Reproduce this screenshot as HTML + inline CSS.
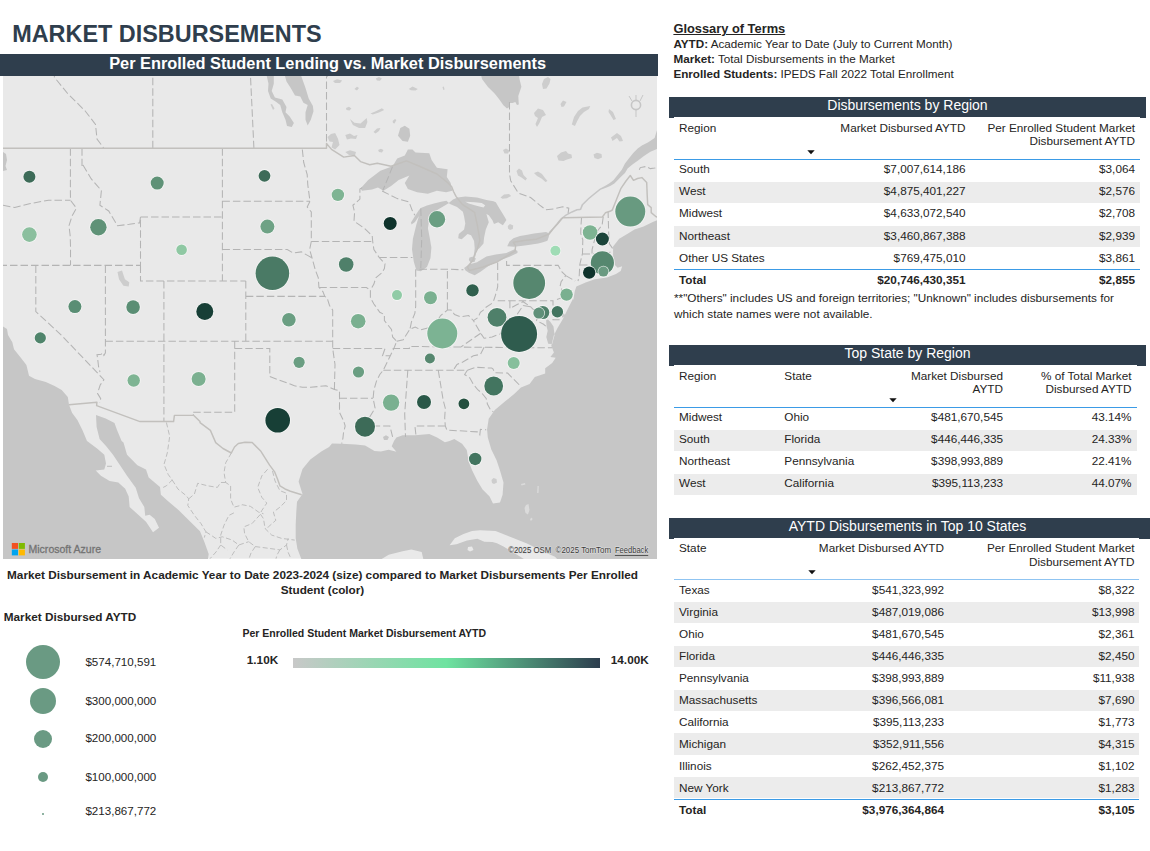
<!DOCTYPE html>
<html lang="en"><head><meta charset="utf-8"><title>Market Disbursements</title>
<style>
html,body{margin:0;padding:0;background:#fff;}
body{width:1150px;height:851px;position:relative;overflow:hidden;font-family:"Liberation Sans",Arial,sans-serif;}
.t{position:absolute;white-space:nowrap;}
.r{position:absolute;}
b{font-weight:bold}
</style></head><body>
<div class="t" style="left:12.2px;top:19.88px;font-size:23.42px;line-height:28px;font-weight:bold;color:#2f3e4d;">MARKET DISBURSEMENTS</div>
<div class="r" style="left:0px;top:54px;width:658px;height:22.4px;background:#2f3e4d;"></div>
<div class="t" style="left:-72.4px;width:800px;text-align:center;top:52.73px;font-size:16.35px;line-height:20px;font-weight:bold;color:#fff;">Per Enrolled Student Lending vs. Market Disbursements</div>
<svg class="r" style="left:3px;top:76px" width="654" height="482.7" viewBox="3 76 654 482.7">
<rect x="3" y="76" width="654" height="482.7" fill="#e9e9e9"/>
<path fill="#c6c6c6" d="M3.0 326.4L7.0 329.0L8.0 335.0L12.3 342.3L14.0 349.3L21.0 358.0L26.4 365.0L29.0 375.8L35.0 379.0L45.8 382.0L54.6 386.0L61.7 390.0L67.8 397.0L69.0 404.8L72.0 412.8L77.4 420.0L82.6 430.4L87.0 441.0L97.4 448.7L104.3 454.8L106.0 463.5L104.3 469.6L95.7 470.4L100.9 475.7L109.6 480.9L118.3 482.6L125.2 488.7L128.7 496.5L129.6 507.0L137.4 513.9L146.0 521.7L153.0 532.2L159.0 527.8L154.8 519.0L149.6 514.8L145.2 515.7L144.3 507.0L139.0 498.3L135.7 487.8L127.0 475.7L120.0 465.2L113.0 454.8L106.0 446.0L99.6 439.0L96.6 427.0L96.0 415.0L105.7 418.4L114.5 423.0L117.0 430.0L121.6 441.0L123.5 442.6L127.0 454.8L137.4 465.2L146.0 469.6L148.7 477.4L160.0 487.0L160.9 494.8L168.7 501.7L179.0 510.4L189.6 520.9L200.0 531.3L204.3 541.7L208.7 554.0L207.8 560.0L3.0 560.0ZM301.7 560.0L297.4 548.7L295.7 538.3L295.7 524.3L296.3 512.0L297.0 501.7L302.5 493.9L298.6 481.4L302.5 468.9L310.3 459.5L321.3 451.6L329.1 446.9L332.0 443.6L341.6 443.8L355.7 444.6L365.1 445.4L374.5 450.9L380.8 451.6L388.6 449.8L396.4 451.8L391.7 446.2L394.0 441.0L396.4 437.6L402.7 435.2L415.2 435.2L429.3 434.1L437.1 437.6L444.9 442.3L449.6 441.0L454.3 439.1L462.1 443.8L466.8 450.1L468.7 461.7L472.2 470.4L477.4 480.9L482.6 489.6L489.6 496.5L493.0 503.5L500.0 502.6L502.6 494.8L503.5 482.6L500.0 470.4L496.5 460.0L491.3 449.6L487.8 437.4L487.0 428.7L487.0 430.0L488.7 418.7L494.8 410.0L505.2 401.3L513.9 394.3L520.9 387.4L529.6 383.9L534.8 377.0L545.2 373.5L545.2 368.3L552.2 363.0L555.7 357.8L550.4 357.0L553.9 352.6L551.3 345.7L553.9 335.2L557.4 328.3L562.6 319.6L567.8 309.0L573.0 298.7L573.3 300.0L574.9 290.7L576.4 286.4L585.6 282.6L594.7 279.2L607.0 277.5L616.0 273.9L620.7 270.9L622.2 266.3L617.7 267.8L614.6 264.7L613.1 255.6L613.1 246.4L619.2 238.8L626.8 234.2L634.5 229.6L643.6 226.5L652.8 222.0L660.0 219.0L660.0 560.0ZM546.1 320.2L546.6 326.5L547.7 330.7L546.3 337.1L548.2 343.8L552.2 344.0L554.6 335.0L553.5 326.5L550.3 321.8L548.0 319.5ZM563.0 318.0L558.5 312.0L556.5 306.0L558.0 305.5L561.0 310.0L565.0 315.0ZM383.0 437.0L386.0 435.3L389.0 437.0L387.5 440.0L384.0 440.0ZM360.5 188.4L368.2 180.0L380.4 170.8L392.6 166.2L397.2 158.6L404.8 155.5L407.9 149.4L412.5 149.4L415.5 152.5L429.3 153.2L431.6 160.1L436.9 167.8L447.6 169.3L446.8 176.9L450.7 183.0L452.2 190.7L446.1 192.2L436.9 190.7L427.8 193.7L417.1 192.2L407.9 189.1L404.8 183.0L409.4 175.4L398.7 180.0L391.1 186.1L383.5 190.7L378.0 187.5L372.0 189.5L362.0 190.7ZM420.8 207.9L427.0 205.5L434.0 203.5L441.1 201.7L446.4 200.8L449.0 203.0L444.0 206.0L438.0 209.5L434.0 213.0L429.6 217.6L427.9 228.2L429.6 237.0L431.4 247.5L430.5 258.1L427.0 266.9L420.8 271.3L416.4 270.5L413.8 261.7L412.0 249.3L412.9 238.7L416.4 224.6L419.0 216.0L415.0 222.0L411.5 224.5L411.0 222.5L415.0 216.0L419.0 210.0ZM448.8 202.9L453.0 199.5L457.6 197.6L465.3 196.5L477.0 197.6L486.4 200.0L493.5 201.2L495.8 202.3L499.3 208.2L502.9 214.1L506.4 220.0L502.9 225.2L498.2 222.3L494.0 224.1L492.3 220.0L488.8 215.3L486.4 214.1L488.8 222.3L485.8 229.4L484.1 237.6L483.5 243.5L479.4 248.2L476.4 250.5L475.4 256.4L473.8 256.4L474.7 248.2L474.1 241.1L471.1 235.2L467.6 234.1L461.7 239.3L458.2 238.2L458.8 234.1L464.1 229.4L465.3 223.5L464.1 216.4L462.9 211.7L457.0 207.0L450.0 204.1ZM469.5 257.5L473.5 256.4L475.8 258.5L474.5 262.0L470.5 262.3L468.8 260.0ZM464.1 268.1L468.8 264.6L477.0 262.3L486.4 256.4L495.8 254.6L506.4 252.9L514.6 249.3L517.5 251.1L517.5 252.9L507.6 257.6L498.2 261.1L488.8 265.8L480.5 271.7L474.7 275.2L468.8 272.8L465.5 270.5ZM507.2 246.2L509.5 241.5L513.4 238.3L520.0 236.0L527.5 234.8L534.0 233.5L540.0 232.7L546.0 232.0L549.5 233.5L548.6 237.5L547.4 240.8L543.0 242.3L538.2 243.5L530.0 244.8L522.9 245.8L513.8 246.8ZM660.0 127.0L656.9 130.6L654.6 138.0L648.3 142.2L641.9 145.4L637.7 148.6L633.5 152.8L629.2 158.1L625.0 163.4L621.8 169.7L617.6 175.0L613.4 180.3L609.1 183.5L604.9 186.1L599.6 188.7L594.3 193.0L588.0 198.3L581.6 204.6L579.5 210.0L581.1 210.0L583.2 205.1L589.0 199.3L595.4 194.0L600.7 189.8L606.0 187.7L610.2 186.1L614.4 183.5L617.6 180.3L621.8 176.0L625.0 172.9L627.6 168.6L632.4 164.4L637.7 160.7L644.0 156.0L650.4 151.7L656.9 149.1L660.0 148.0ZM479.9 70.0L482.0 79.0L488.0 87.0L494.6 93.5L499.0 99.0L503.4 105.3L507.0 108.4L509.5 107.0L509.2 102.9L512.5 103.0L515.3 102.0L517.0 105.0L518.8 104.5L518.3 96.0L521.4 86.8L519.5 79.0L518.3 70.0ZM283.3 70.0L301.3 70.0L301.3 76.3L305.5 88.0L308.7 98.5L312.9 105.9L313.5 111.2L310.8 119.7L307.7 125.5L305.5 119.7L305.5 112.3L307.7 104.9L303.4 102.8L300.3 96.4L295.0 95.4L290.7 88.0L286.5 81.6ZM265.4 70.0L273.8 70.0L273.8 83.7L271.7 91.1L274.9 97.5L282.3 99.6L286.5 107.0L285.5 112.3L289.7 116.5L293.9 122.9L291.8 127.1L287.0 126.0L285.5 119.7L282.3 112.3L280.2 104.9L275.9 101.7L270.7 98.5L268.0 91.1L268.5 83.7ZM400.3 128.0L404.8 125.8L409.4 128.8L410.2 135.7L407.9 141.8L402.6 141.0L398.0 135.7ZM3.0 152.0L6.0 154.0L7.0 160.0L5.5 166.0L7.0 170.0L3.0 171.0Z"/>
<path fill="#cdcdcd" d="M491.5 480.0L493.5 478.0L496.5 479.0L497.0 482.5L494.0 484.0L492.0 483.0ZM327.5 137.0L331.0 134.0L335.1 133.0L338.0 138.7L339.5 145.0L335.1 149.5L331.5 147.5L333.0 142.0L329.5 141.5ZM571.8 124.5L574.0 117.0L578.0 111.0L582.5 107.4L590.2 105.9L589.0 109.0L584.0 112.0L580.0 116.0L577.0 121.5L575.0 126.0ZM593.5 154.5L597.0 152.8L601.5 154.0L602.0 157.5L598.0 159.3L594.5 158.0ZM557.0 156.0L561.0 152.5L566.0 151.0L568.0 153.5L571.5 154.5L572.0 158.0L567.0 159.5L563.5 161.0L558.5 160.5ZM542.0 84.0L544.0 79.0L548.0 77.0L550.5 79.0L549.5 83.5L546.5 88.5L543.0 89.0ZM560.5 104.0L563.0 100.5L566.5 102.0L564.0 106.5L561.5 107.0ZM534.0 113.0L538.0 108.5L543.0 110.0L546.0 115.0L542.0 117.0L539.5 123.0L537.0 127.0L535.5 124.0L538.0 118.0L535.0 116.0ZM609.0 109.0L613.0 112.0L616.0 119.0L613.5 120.0L610.5 115.0L608.5 112.0ZM611.0 137.5L617.0 133.0L621.0 136.0L623.0 141.0L619.5 141.5L617.0 138.0L612.5 141.0ZM516.5 171.0L519.0 168.5L522.0 170.5L523.5 175.0L527.0 178.5L525.5 180.5L521.5 177.5L518.0 175.5ZM534.0 173.0L538.0 171.5L542.0 174.0L545.0 178.0L547.5 181.0L545.5 182.0L541.5 178.5L537.0 176.0ZM117.5 272.0L122.0 270.5L124.9 279.3L129.3 282.2L128.7 286.6L123.4 285.8L119.0 279.3ZM503.0 150.0L506.0 148.5L509.5 150.5L508.0 153.5L504.5 153.5ZM500.5 197.5L504.0 194.6L509.0 194.1L511.1 196.0L507.0 198.3L502.5 198.8ZM507.8 226.0L510.0 224.1L513.2 225.5L512.8 229.0L510.0 229.9L508.0 228.5ZM270.5 104.5L272.0 104.0L274.5 108.5L273.0 110.0ZM349.9 118.9L354.4 122.7L360.5 123.5L366.7 118.1L367.4 121.9L365.1 128.0L359.0 128.0L352.9 125.0ZM370.5 113.5L375.8 111.2L381.9 108.2L384.2 110.0L378.9 112.5L372.8 114.6ZM408.7 89.1L412.5 86.5L417.8 89.1L415.5 90.6L411.0 90.2ZM345.3 152.0L350.0 150.3L356.0 152.0L355.0 155.5L349.0 155.0ZM346.0 108.0L349.0 106.7L351.4 108.5L349.5 110.5L346.5 110.0ZM354.4 89.0L357.0 86.8L359.0 88.0L357.0 90.6ZM333.0 81.0L337.0 79.2L342.2 80.5L340.0 83.0L335.0 83.0ZM375.8 78.5L379.0 76.9L381.9 78.5L380.0 80.7L377.0 80.5ZM373.5 132.0L377.0 128.5L380.4 128.0L379.0 131.0L375.5 133.4ZM392.6 121.0L395.0 118.9L396.4 120.0L394.5 123.5L393.0 123.0ZM378.1 150.0L381.0 148.7L383.5 150.0L382.0 152.5L379.0 152.0ZM345.3 135.0L350.0 133.4L354.0 136.0L357.5 135.0L356.0 139.0L351.0 138.5L347.0 139.5ZM442.5 87.0L443.8 86.5L444.6 89.5L443.3 90.0Z"/>
<path fill="#e9e9e9" d="M449.6 545.2L454.8 538.3L463.5 533.9L472.0 531.0L480.0 530.2L495.6 531.0L511.3 537.2L527.0 543.5L542.6 551.3L555.0 556.8L558.0 560.0L525.4 560.0L519.1 556.0L511.0 551.0L503.5 546.6L497.0 543.2L492.5 541.9L484.3 541.7L477.4 538.8L467.0 540.5L456.5 544.3ZM468.0 547.0L472.0 546.5L473.5 550.0L470.0 551.5L467.5 550.0ZM380.0 560.0L388.7 554.8L402.6 551.3L411.3 549.6L421.7 552.0L423.5 560.0ZM465.3 201.7L474.7 202.3L481.7 202.9L485.2 205.3L483.5 207.6L479.4 206.4L474.7 205.3L468.8 203.5Z"/>
<path fill="#e9e9e9" fill-opacity="0.6" d="M526.0 505.0L528.5 504.0L529.5 510.0L528.0 514.5L525.5 513.0L524.5 508.0ZM537.5 486.0L538.8 486.0L538.5 493.0L537.2 493.0ZM530.0 519.0L532.0 517.5L532.5 519.5L530.8 521.0ZM521.0 484.0L525.0 483.0L525.5 484.5L521.5 485.5Z"/>
<path d="M549 233L553 228.6L557 224L561 219L566 215.1L572 212L577 209.8L580.3 209.5" fill="none" stroke="#c6c6c6" stroke-width="1.4"/>
<circle cx="636" cy="105" r="4.6" fill="none" stroke="#c6c6c6" stroke-width="1.6"/>
<path d="M636 110v7M632 101l-3-5M640 101l3-6M636 100v-5" stroke="#c6c6c6" stroke-width="1" fill="none"/>
<path fill="none" stroke="#b4b4b4" stroke-width="1.05" stroke-dasharray="7.5 3" d="M3.0 205.2L14.7 207.5L29.4 203.7L48.5 200.2L70.5 200.3M70.4 148.3L70.4 193.5L70.5 200.3L76.4 208.1L72.0 216.0L69.0 225.7L70.2 236.0L70.5 246.3L70.5 265.4M-11.0 265.4L140.5 265.4M35.8 265.4L35.8 311.6L61.0 334.8L103.9 379.7L100.2 385.0L97.5 393.4L100.7 398.7L99.6 402.9M105.4 265.4L105.4 352.9L103.9 355.4L102.3 352.7L101.2 354.3L97.0 354.8L97.5 357.5L98.6 367.0L100.0 372.0M105.4 341.3L332.7 341.3M163.9 281.0L163.9 421.5M140.5 265.4L140.5 281.0L245.8 281.0M82.0 148.3L82.0 166.0L82.3 164.0L91.1 178.7L101.4 190.5L99.9 205.2L108.7 211.0L117.5 225.7L129.3 224.3L139.6 222.8L140.5 216.9L140.5 265.4M140.5 217.0L222.4 217.0M222.4 148.3L222.4 281.0M222.4 201.3L310.0 201.3M222.4 249.5L287.3 249.5L293.2 253.0L301.4 251.9L308.4 255.9L311.3 257.5M245.8 281.0L245.8 341.3M245.8 296.4L324.8 296.4M234.7 341.3L234.7 412.3L192.3 412.3L193.7 415.7M234.7 348.6L269.8 348.6L269.8 376.5L279.1 380.2L287.3 383.0L294.4 385.8L302.5 387.2L310.7 387.2L318.9 386.5L325.9 385.8L334.4 389.5L339.5 390.7L339.5 412.3L343.5 420.6L345.2 426.0L343.5 432.8L342.9 438.3L341.7 443.7M334.4 389.5L335.0 364.5L332.7 348.6L332.7 310.1L329.5 305.5L327.1 297.9L324.8 296.4L323.0 291.8L318.9 287.2L318.3 277.9L315.4 270.1L311.9 257.5L309.6 249.5L311.3 241.5L311.3 212.0L307.2 207.0L310.0 201.3L307.8 185.0L307.2 174.7L303.7 162.5L302.2 148.3M339.5 398.2L373.1 398.2M332.7 348.6L385.0 348.6L382.5 355.8L390.3 355.8M392.6 436.9L389.9 426.0L368.1 426.0L369.2 417.8L375.1 408.2L373.1 398.4L373.9 390.0L376.3 381.6L379.8 374.5L383.3 370.2L386.8 363.0L390.3 355.8L393.8 348.6L396.7 341.3L392.6 336.9L391.5 329.5L384.4 320.6L384.4 314.6L379.8 312.3L373.9 304.0L370.4 297.9L370.4 290.3L373.9 284.1L375.7 277.9L382.1 272.5L384.4 268.5L385.0 263.8L379.2 257.5L373.9 249.5L372.7 241.5L372.2 235.8L364.6 228.5L354.0 221.1L354.6 212.0L352.9 205.3L359.9 199.1L359.9 189.1L362.2 187.6M319.3 287.5L366.5 287.5L370.4 290.6M311.3 241.5L372.5 241.5M379.3 257.5L412.5 257.5M415.7 269.2L415.7 306.3L414.9 313.1L411.4 322.1L410.2 328.0L409.6 329.5M396.7 341.3L403.2 339.8L409.6 329.5L415.2 327.0L420.7 329.9L427.7 328.0L433.6 326.5L436.5 322.5L440.6 315.6L447.4 310.1L451.1 310.1L454.6 314.6L460.5 316.8L468.7 315.6L473.4 320.6L478.0 317.6L480.4 312.3L483.3 310.1L485.6 307.5L492.1 303.3L493.8 300.2L495.4 295.3L496.8 290.3L497.7 286.6L497.7 260.7M447.4 310.1L447.4 270.1M419.5 269.2L447.6 269.2L463.4 269.8M382.1 191.0L397.3 198.6L409.0 202.0L412.5 211.2L414.9 215.3M506.6 261.1L506.6 265.4L558.2 265.4L561.7 271.7L565.8 275.6L561.1 281.8L559.9 287.2L565.2 293.4L561.1 297.9L557.0 299.5M497.7 300.7L553.0 300.7L553.0 319.8L561.7 319.8M565.8 275.6L575.2 281.0M509.9 300.7L509.9 308.6L516.7 304.8L523.1 301.7L530.5 306.7L535.4 311.6L538.4 314.6L536.5 320.6L543.6 324.3L547.1 327.3M530.5 306.7L523.1 305.5L517.0 314.6L512.0 319.8L507.9 317.6L500.3 333.9L492.1 336.9L484.1 338.3L480.7 333.3L473.4 320.6M480.7 333.3L460.7 347.1M392.6 348.6L409.4 348.6L409.4 346.4L460.7 347.1L484.1 347.3L552.1 347.8M484.1 347.3L480.4 354.4L473.4 355.8L467.5 359.2L462.8 362.0L457.0 364.5L453.2 370.3M383.3 370.2L467.4 370.2L475.7 367.3L491.6 368.1L492.9 368.8L494.7 372.8L507.6 373.1L520.8 386.4M467.4 370.2L464.6 374.5L469.9 378.0L473.4 384.4L478.0 390.0L481.6 392.8L486.2 398.4L487.4 404.0L490.3 409.5L493.3 411.9M438.3 370.5L443.2 400.2L445.3 408.2L444.7 417.8L445.3 426.0L446.9 430.1L478.0 431.9L479.8 434.7L480.4 429.4L486.2 429.8M445.3 426.0L414.9 426.0L416.0 435.5M407.8 370.3L404.7 413.7L405.5 436.9M581.6 217.0L581.0 225.2L580.7 233.4L582.8 239.9L582.5 253.5L579.8 264.6L579.2 276.4L578.0 281.0M603.2 217.0L602.1 225.2L596.8 231.8L595.0 238.3L592.1 249.5L592.0 253.8M582.5 253.8L605.6 254.3L611.2 251.6M580.0 264.8L599.7 265.1L604.6 265.1L607.6 270.7L607.7 273.2M599.7 265.1L599.7 276.1M612.6 248.4L609.4 243.9L608.7 233.4L608.1 212.0M420.8 208.5L421.7 238.7L420.8 268.0M392.6 166.4L388.0 178.0L382.9 190.2M54.4 70.0L54.4 77.3L67.6 93.5L85.2 111.0L95.5 124.4L97.0 139.0L102.9 147.0L104.0 148.8M152.8 148.3L152.8 64.1M253.9 148.3L252.2 111.9L249.9 64.1M326.5 141.5L326.5 76.8L340.0 64.1M509.5 102.0L509.5 173.9L510.7 180.7L518.3 193.0L530.6 197.5L539.7 205.1L545.8 209.7L553.5 209.0L562.7 206.7L568.8 208.2L568.0 214.0M639.3 169.7L640.3 167.6L646.1 166.5L650.4 168.6L654.6 168.1L660.0 167.0"/>
<path fill="none" stroke="#b6b6b6" stroke-width="0.85" stroke-dasharray="5 2.5" d="M112.0 466.3L105.0 466.3M166.4 422.5L169.7 436.4L167.3 452.9L164.0 464.4L168.1 474.3L172.2 480.0L166.4 485.8L161.5 488.3M172.2 480.0L178.0 489.1L186.2 495.7L188.7 498.9L187.8 505.5L194.4 515.4L201.0 523.6L205.9 531.8L204.3 537.6M188.7 498.9L194.4 494.0L197.7 483.3L207.6 485.8L217.4 487.4L220.7 482.5L225.7 482.5M231.4 452.9L225.7 462.8L224.0 472.6L225.7 482.5L230.6 485.8L230.6 498.9L233.9 507.2L240.5 505.5L242.1 504.7L250.3 506.3L258.6 512.1L263.5 513.8M267.6 469.3L261.8 475.9L257.7 487.4L261.8 497.3L266.8 503.1L261.8 510.5L260.2 513.8L263.5 518.7L265.1 528.6L271.7 535.1L281.6 538.4L294.7 540.1M272.5 471.0L275.0 480.9L279.9 490.7L286.5 493.2L286.5 500.6L279.9 507.2L273.4 512.1L275.8 520.3L268.4 526.9L265.1 528.6M233.9 512.9L228.9 515.4L224.0 525.3L220.7 535.1L220.7 545.0L227.3 550.0M260.2 514.6L252.0 523.6L243.8 526.9L244.6 533.5L248.7 541.7L255.3 546.6L268.4 548.3L279.9 549.9L286.5 545.0L288.2 538.4M205.9 531.8L215.8 538.4L222.4 536.8L232.2 540.1L238.8 545.0L248.7 541.7M220.7 545.0L216.0 552.0L210.0 558.7M238.8 545.0L234.0 552.0L230.0 558.7M255.3 546.6L251.0 553.0L249.0 558.7M279.9 549.9L277.0 555.0L276.0 558.7M286.5 545.0L288.0 552.0L291.0 558.7"/>
<path fill="none" stroke="#c2c0bd" stroke-width="1.45" stroke-linejoin="round" d="M-5.2 148.3L326.5 148.3L326.5 143.5L331.5 149.4L343.7 157.1L354.4 155.5L360.5 161.6L369.7 164.7L377.3 163.2L391.1 166.2L406.4 160.9L420.0 166.5L437.0 174.0L447.5 182.5L451.7 186.7L453.5 191.5L456.0 196.4L462.3 204.4L474.6 212.3L477.5 226.0L479.9 240.5L477.0 250.0L474.6 254.6L473.0 260.0L467.5 267.0L469.3 270.5L483.0 267.0L497.5 261.7L515.1 251.0L515.6 245.8L513.4 242.3L524.0 240.5L536.3 239.3L548.9 234.2L553.0 229.0L557.5 224.0L562.7 217.7L602.4 217.0L605.4 212.8L610.0 211.3L612.3 210.0L616.5 199.5L620.8 188.7L626.0 181.0L630.3 175.5L633.5 180.3L637.5 178.5L641.9 177.6L646.7 182.4L647.2 195.0L647.7 204.6L651.2 207.6L651.2 212.6L656.1 216.8L660.0 218.0M69.0 404.8L96.9 402.2L96.6 405.7L140.0 421.6L173.6 421.6L174.4 415.4L193.8 415.4L200.0 421.6L200.0 422.6L210.4 430.4L215.7 442.6L223.0 448.5L231.3 453.0L234.5 447.0L238.3 443.5L245.0 442.2L252.2 442.6L260.9 451.3L269.6 465.2L274.8 472.2L277.5 479.0L280.0 486.0L285.0 489.0L290.4 491.3L301.7 494.8"/>
<circle cx="29.4" cy="176.7" r="6.8" fill="#f7f9f7" fill-opacity="0.8"/><circle cx="29.4" cy="176.7" r="6" fill="#3d6b58"/>
<circle cx="157.2" cy="183.1" r="7.3" fill="#f7f9f7" fill-opacity="0.8"/><circle cx="157.2" cy="183.1" r="6.5" fill="#5f9277"/>
<circle cx="264.5" cy="175.8" r="6.7" fill="#f7f9f7" fill-opacity="0.8"/><circle cx="264.5" cy="175.8" r="5.9" fill="#3d6b58"/>
<circle cx="29.4" cy="234.6" r="8.1" fill="#f7f9f7" fill-opacity="0.8"/><circle cx="29.4" cy="234.6" r="7.3" fill="#8bbf9e"/>
<circle cx="98.4" cy="227.2" r="9.0" fill="#f7f9f7" fill-opacity="0.8"/><circle cx="98.4" cy="227.2" r="8.2" fill="#5f9277"/>
<circle cx="181.6" cy="249.8" r="6.1" fill="#f7f9f7" fill-opacity="0.8"/><circle cx="181.6" cy="249.8" r="5.3" fill="#8fc8a3"/>
<circle cx="267.4" cy="226.6" r="7.8" fill="#f7f9f7" fill-opacity="0.8"/><circle cx="267.4" cy="226.6" r="7" fill="#6ea285"/>
<circle cx="272.4" cy="273.3" r="17.6" fill="#f7f9f7" fill-opacity="0.8"/><circle cx="272.4" cy="273.3" r="16.8" fill="#4a7a65"/>
<circle cx="74.9" cy="306.6" r="7.3" fill="#f7f9f7" fill-opacity="0.8"/><circle cx="74.9" cy="306.6" r="6.5" fill="#5a8e74"/>
<circle cx="133.1" cy="307.1" r="7.6" fill="#f7f9f7" fill-opacity="0.8"/><circle cx="133.1" cy="307.1" r="6.8" fill="#5a8e74"/>
<circle cx="204.8" cy="311.5" r="9.3" fill="#f7f9f7" fill-opacity="0.8"/><circle cx="204.8" cy="311.5" r="8.5" fill="#173f36"/>
<circle cx="288.9" cy="319.8" r="7.6" fill="#f7f9f7" fill-opacity="0.8"/><circle cx="288.9" cy="319.8" r="6.8" fill="#6a9e82"/>
<circle cx="40.3" cy="337.9" r="6.3999999999999995" fill="#f7f9f7" fill-opacity="0.8"/><circle cx="40.3" cy="337.9" r="5.6" fill="#4f846b"/>
<circle cx="133.7" cy="380.5" r="7.0" fill="#f7f9f7" fill-opacity="0.8"/><circle cx="133.7" cy="380.5" r="6.2" fill="#7eb493"/>
<circle cx="198.6" cy="379" r="7.8" fill="#f7f9f7" fill-opacity="0.8"/><circle cx="198.6" cy="379" r="7" fill="#7bb090"/>
<circle cx="299.1" cy="362.3" r="6.3999999999999995" fill="#f7f9f7" fill-opacity="0.8"/><circle cx="299.1" cy="362.3" r="5.6" fill="#6a9e82"/>
<circle cx="277.7" cy="420.2" r="13.100000000000001" fill="#f7f9f7" fill-opacity="0.8"/><circle cx="277.7" cy="420.2" r="12.3" fill="#173f36"/>
<circle cx="337.9" cy="194.9" r="7.0" fill="#f7f9f7" fill-opacity="0.8"/><circle cx="337.9" cy="194.9" r="6.2" fill="#7eb493"/>
<circle cx="390.2" cy="223.4" r="7.3" fill="#f7f9f7" fill-opacity="0.8"/><circle cx="390.2" cy="223.4" r="6.5" fill="#0f332c"/>
<circle cx="437" cy="219.3" r="9.0" fill="#f7f9f7" fill-opacity="0.8"/><circle cx="437" cy="219.3" r="8.2" fill="#6a9e82"/>
<circle cx="346.2" cy="264.5" r="8.1" fill="#f7f9f7" fill-opacity="0.8"/><circle cx="346.2" cy="264.5" r="7.3" fill="#4f806a"/>
<circle cx="397" cy="295.1" r="5.8" fill="#f7f9f7" fill-opacity="0.8"/><circle cx="397" cy="295.1" r="5" fill="#90cba6"/>
<circle cx="430.5" cy="297.7" r="7.3" fill="#f7f9f7" fill-opacity="0.8"/><circle cx="430.5" cy="297.7" r="6.5" fill="#7ab090"/>
<circle cx="472.5" cy="290.4" r="7.0" fill="#f7f9f7" fill-opacity="0.8"/><circle cx="472.5" cy="290.4" r="6.2" fill="#30604e"/>
<circle cx="529.2" cy="283" r="16.7" fill="#f7f9f7" fill-opacity="0.8"/><circle cx="529.2" cy="283" r="15.9" fill="#56876f"/>
<circle cx="555.4" cy="250.7" r="5.8" fill="#f7f9f7" fill-opacity="0.8"/><circle cx="555.4" cy="250.7" r="5" fill="#9fdcb5"/>
<circle cx="590.1" cy="232.5" r="8.1" fill="#f7f9f7" fill-opacity="0.8"/><circle cx="590.1" cy="232.5" r="7.3" fill="#7db392"/>
<circle cx="602.4" cy="239" r="7.3" fill="#f7f9f7" fill-opacity="0.8"/><circle cx="602.4" cy="239" r="6.5" fill="#1b443a"/>
<circle cx="630.3" cy="211.6" r="15.8" fill="#f7f9f7" fill-opacity="0.8"/><circle cx="630.3" cy="211.6" r="15" fill="#689a80"/>
<circle cx="602.4" cy="262.8" r="12.4" fill="#f7f9f7" fill-opacity="0.8"/><circle cx="602.4" cy="262.8" r="11.6" fill="#56876f"/>
<circle cx="589.2" cy="272.6" r="7.0" fill="#f7f9f7" fill-opacity="0.8"/><circle cx="589.2" cy="272.6" r="6.2" fill="#0f332c"/>
<circle cx="603.4" cy="271.6" r="5.8" fill="#f7f9f7" fill-opacity="0.8"/><circle cx="603.4" cy="271.6" r="5" fill="#6a9a81"/>
<circle cx="566.6" cy="294.6" r="7.0" fill="#f7f9f7" fill-opacity="0.8"/><circle cx="566.6" cy="294.6" r="6.2" fill="#7ab090"/>
<circle cx="497" cy="317.3" r="10.200000000000001" fill="#f7f9f7" fill-opacity="0.8"/><circle cx="497" cy="317.3" r="9.4" fill="#4f806a"/>
<circle cx="542.7" cy="312.5" r="7.3999999999999995" fill="#f7f9f7" fill-opacity="0.8"/><circle cx="542.7" cy="312.5" r="6.6" fill="#4f806a"/>
<circle cx="538.8" cy="313.1" r="6.3" fill="#f7f9f7" fill-opacity="0.8"/><circle cx="538.8" cy="313.1" r="5.5" fill="#5f9079"/>
<circle cx="557.4" cy="311.7" r="6.5" fill="#f7f9f7" fill-opacity="0.8"/><circle cx="557.4" cy="311.7" r="5.7" fill="#437560"/>
<circle cx="519.1" cy="334" r="18.8" fill="#f7f9f7" fill-opacity="0.8"/><circle cx="519.1" cy="334" r="18" fill="#2f5c4e"/>
<circle cx="513.7" cy="363" r="6.8" fill="#f7f9f7" fill-opacity="0.8"/><circle cx="513.7" cy="363" r="6" fill="#86bf9c"/>
<circle cx="493.7" cy="386" r="10.200000000000001" fill="#f7f9f7" fill-opacity="0.8"/><circle cx="493.7" cy="386" r="9.4" fill="#437560"/>
<circle cx="358.2" cy="321.2" r="8.1" fill="#f7f9f7" fill-opacity="0.8"/><circle cx="358.2" cy="321.2" r="7.3" fill="#7ab090"/>
<circle cx="442.3" cy="333.5" r="15.8" fill="#f7f9f7" fill-opacity="0.8"/><circle cx="442.3" cy="333.5" r="15" fill="#7cb393"/>
<circle cx="429.9" cy="358.5" r="5.8" fill="#f7f9f7" fill-opacity="0.8"/><circle cx="429.9" cy="358.5" r="5" fill="#56876f"/>
<circle cx="358.5" cy="372" r="6.3999999999999995" fill="#f7f9f7" fill-opacity="0.8"/><circle cx="358.5" cy="372" r="5.6" fill="#6a9e82"/>
<circle cx="391.1" cy="402.6" r="9.0" fill="#f7f9f7" fill-opacity="0.8"/><circle cx="391.1" cy="402.6" r="8.2" fill="#7ab090"/>
<circle cx="424" cy="402" r="7.8" fill="#f7f9f7" fill-opacity="0.8"/><circle cx="424" cy="402" r="7" fill="#2a5848"/>
<circle cx="463.9" cy="403.8" r="6.2" fill="#f7f9f7" fill-opacity="0.8"/><circle cx="463.9" cy="403.8" r="5.4" fill="#24503f"/>
<circle cx="365" cy="426.7" r="10.8" fill="#f7f9f7" fill-opacity="0.8"/><circle cx="365" cy="426.7" r="10" fill="#3d6b58"/>
<circle cx="475.2" cy="459" r="7.0" fill="#f7f9f7" fill-opacity="0.8"/><circle cx="475.2" cy="459" r="6.2" fill="#437560"/>
<g><rect x="11.8" y="543" width="6.2" height="5.9" fill="#f25022"/><rect x="18.7" y="543" width="6.2" height="5.9" fill="#7fba00"/><rect x="11.8" y="549.5" width="6.2" height="5.9" fill="#00a4ef"/><rect x="18.7" y="549.5" width="6.2" height="5.9" fill="#ffb900"/></g>
<text x="28.5" y="553.3" font-family="Liberation Sans, sans-serif" font-size="10.55" fill="#737373" stroke="#737373" stroke-width="0.3">Microsoft Azure</text>
<text x="508.2" y="552.6" font-family="Liberation Sans, sans-serif" font-size="8.2" fill="#3a3a3a" stroke="#dedede" stroke-width="1.1" paint-order="stroke" lengthAdjust="spacingAndGlyphs" textLength="43">©2025 OSM</text>
<text x="555.6" y="552.6" font-family="Liberation Sans, sans-serif" font-size="8.2" fill="#3a3a3a" stroke="#dedede" stroke-width="1.1" paint-order="stroke" lengthAdjust="spacingAndGlyphs" textLength="55.5">©2025 TomTom</text>
<text x="614.9" y="552.6" font-family="Liberation Sans, sans-serif" font-size="8.2" fill="#3a3a3a" stroke="#dedede" stroke-width="1.1" paint-order="stroke" lengthAdjust="spacingAndGlyphs" textLength="33.3">Feedback</text>
<rect x="614.9" y="555" width="33.3" height="0.8" fill="#3a3a3a"/>
</svg>
<div class="t" style="left:-77.5px;width:800px;text-align:center;top:567.93px;font-size:11.76px;line-height:14px;font-weight:bold;color:#252423;">Market Disbursement in Academic Year to Date 2023-2024 (size) compared to Market Disbursements Per Enrolled</div>
<div class="t" style="left:-77.5px;width:800px;text-align:center;top:582.93px;font-size:11.76px;line-height:14px;font-weight:bold;color:#252423;">Student (color)</div>
<div class="t" style="left:3.8px;top:609.93px;font-size:11.76px;line-height:14px;font-weight:bold;color:#252423;">Market Disbursed AYTD</div>
<div class="r" style="left:26px;top:644.6px;width:34px;height:34px;border-radius:50%;background:#6a9a83"></div>
<div class="t" style="left:85.4px;top:654.98px;font-size:11.6px;line-height:14px;color:#252423;">$574,710,591</div>
<div class="r" style="left:29.9px;top:688.3px;width:26.2px;height:26.2px;border-radius:50%;background:#6a9a83"></div>
<div class="t" style="left:85.4px;top:693.88px;font-size:11.6px;line-height:14px;color:#252423;">$300,000,000</div>
<div class="r" style="left:34px;top:730px;width:18px;height:18px;border-radius:50%;background:#6a9a83"></div>
<div class="t" style="left:85.4px;top:730.88px;font-size:11.6px;line-height:14px;color:#252423;">$200,000,000</div>
<div class="r" style="left:37.8px;top:771.8px;width:10.4px;height:10.4px;border-radius:50%;background:#6a9a83"></div>
<div class="t" style="left:85.4px;top:769.78px;font-size:11.6px;line-height:14px;color:#252423;">$100,000,000</div>
<div class="r" style="left:41.7px;top:812.7px;width:2.6px;height:2.6px;border-radius:50%;background:#6a9a83"></div>
<div class="t" style="left:85.4px;top:803.88px;font-size:11.6px;line-height:14px;color:#252423;">$213,867,772</div>
<div class="t" style="left:242.4px;top:626.86px;font-size:10.5px;line-height:13px;font-weight:bold;color:#252423;">Per Enrolled Student Market Disbursement AYTD</div>
<div class="t" style="left:246.8px;top:652.93px;font-size:11.76px;line-height:14px;font-weight:bold;color:#252423;">1.10K</div>
<div class="t" style="left:610.8px;top:652.93px;font-size:11.76px;line-height:14px;font-weight:bold;color:#252423;">14.00K</div>
<div class="r" style="left:293px;top:657.5px;width:307px;height:10px;background:linear-gradient(90deg,#c8c8c8 0%,#6ee3a0 50%,#2d3e4e 100%);"></div>
<div class="t" style="left:673.4px;top:21.35px;font-size:12.85px;line-height:15px;font-weight:bold;color:#252423;text-decoration:underline;">Glossary of Terms</div>
<div class="t" style="left:673.4px;top:37.05px;font-size:11.7px;line-height:14px;color:#252423;"><b>AYTD:</b> Academic Year to Date (July to Current Month)</div>
<div class="t" style="left:673.4px;top:52.25px;font-size:11.7px;line-height:14px;color:#252423;"><b>Market:</b> Total Disbursements in the Market</div>
<div class="t" style="left:673.4px;top:67.35px;font-size:11.7px;line-height:14px;color:#252423;"><b>Enrolled Students:</b> IPEDS Fall 2022 Total Enrollment</div>
<div class="r" style="left:669px;top:97px;width:477px;height:20.6px;background:#2f3e4d;"></div>
<div class="r" style="left:674px;top:116.7px;width:466px;height:1.4px;background:#fff;"></div>
<div class="t" style="left:507.5px;width:800px;text-align:center;top:96.85px;font-size:14px;line-height:17px;color:#fff;">Disbursements by Region</div>
<div class="t" style="left:679px;top:120.93px;font-size:11.76px;line-height:14px;color:#252423;">Region</div>
<div class="t" style="right:184.5px;top:120.93px;font-size:11.76px;line-height:14px;color:#252423;">Market Disbursed AYTD</div>
<div class="t" style="right:15px;top:120.93px;font-size:11.76px;line-height:14px;color:#252423;">Per Enrolled Student Market</div>
<div class="t" style="right:15px;top:133.63px;font-size:11.76px;line-height:14px;color:#252423;">Disbursement AYTD</div>
<svg class="r" style="left:807px;top:149.8px" width="8" height="5" viewBox="0 0 8 5"><path d="M0.3 0.2H7.7L4 4.2Z" fill="#111"/></svg>
<div class="r" style="left:674px;top:159.0px;width:466px;height:1.1px;background:#3b9be6;"></div>
<div class="t" style="left:679px;top:162.38px;font-size:11.76px;line-height:14px;color:#252423;">South</div>
<div class="t" style="right:184.5px;top:162.38px;font-size:11.76px;line-height:14px;color:#252423;">$7,007,614,186</div>
<div class="t" style="right:15px;top:162.38px;font-size:11.76px;line-height:14px;color:#252423;">$3,064</div>
<div class="r" style="left:674px;top:181.75px;width:466px;height:21.2px;background:#ececec;"></div>
<div class="t" style="left:679px;top:184.43px;font-size:11.76px;line-height:14px;color:#252423;">West</div>
<div class="t" style="right:184.5px;top:184.43px;font-size:11.76px;line-height:14px;color:#252423;">$4,875,401,227</div>
<div class="t" style="right:15px;top:184.43px;font-size:11.76px;line-height:14px;color:#252423;">$2,576</div>
<div class="t" style="left:679px;top:206.48px;font-size:11.76px;line-height:14px;color:#252423;">Midwest</div>
<div class="t" style="right:184.5px;top:206.48px;font-size:11.76px;line-height:14px;color:#252423;">$4,633,072,540</div>
<div class="t" style="right:15px;top:206.48px;font-size:11.76px;line-height:14px;color:#252423;">$2,708</div>
<div class="r" style="left:674px;top:225.85px;width:466px;height:21.2px;background:#ececec;"></div>
<div class="t" style="left:679px;top:228.53px;font-size:11.76px;line-height:14px;color:#252423;">Northeast</div>
<div class="t" style="right:184.5px;top:228.53px;font-size:11.76px;line-height:14px;color:#252423;">$3,460,867,388</div>
<div class="t" style="right:15px;top:228.53px;font-size:11.76px;line-height:14px;color:#252423;">$2,939</div>
<div class="t" style="left:679px;top:250.58px;font-size:11.76px;line-height:14px;color:#252423;">Other US States</div>
<div class="t" style="right:184.5px;top:250.58px;font-size:11.76px;line-height:14px;color:#252423;">$769,475,010</div>
<div class="t" style="right:15px;top:250.58px;font-size:11.76px;line-height:14px;color:#252423;">$3,861</div>
<div class="r" style="left:674px;top:269.25px;width:466px;height:1.2px;background:#3b9be6;"></div>
<div class="t" style="left:679px;top:272.68px;font-size:11.76px;line-height:14px;font-weight:bold;color:#252423;">Total</div>
<div class="t" style="right:184.5px;top:272.68px;font-size:11.76px;line-height:14px;font-weight:bold;color:#252423;">$20,746,430,351</div>
<div class="t" style="right:15px;top:272.68px;font-size:11.76px;line-height:14px;font-weight:bold;color:#252423;">$2,855</div>
<div class="t" style="left:674px;top:291.43px;font-size:11.76px;line-height:14px;color:#252423;">**"Others" includes US and foreign territories; "Unknown" includes disbursements for</div>
<div class="t" style="left:674px;top:307.13px;font-size:11.76px;line-height:14px;color:#252423;">which state names were not available.</div>
<div class="r" style="left:669px;top:345px;width:477px;height:20.6px;background:#2f3e4d;"></div>
<div class="r" style="left:674px;top:364.7px;width:463px;height:1.4px;background:#fff;"></div>
<div class="t" style="left:507.5px;width:800px;text-align:center;top:344.85px;font-size:14px;line-height:17px;color:#fff;">Top State by Region</div>
<div class="t" style="left:679px;top:368.93px;font-size:11.76px;line-height:14px;color:#252423;">Region</div>
<div class="t" style="left:784.3px;top:368.93px;font-size:11.76px;line-height:14px;color:#252423;">State</div>
<div class="t" style="right:147px;top:368.93px;font-size:11.76px;line-height:14px;color:#252423;">Market Disbursed</div>
<div class="t" style="right:147px;top:381.63px;font-size:11.76px;line-height:14px;color:#252423;">AYTD</div>
<div class="t" style="right:18.5px;top:368.93px;font-size:11.76px;line-height:14px;color:#252423;">% of Total Market</div>
<div class="t" style="right:18.5px;top:381.63px;font-size:11.76px;line-height:14px;color:#252423;">Disbursed AYTD</div>
<svg class="r" style="left:888.6px;top:397.8px" width="8" height="5" viewBox="0 0 8 5"><path d="M0.3 0.2H7.7L4 4.2Z" fill="#111"/></svg>
<div class="r" style="left:674px;top:407.0px;width:463px;height:1.1px;background:#3b9be6;"></div>
<div class="t" style="left:679px;top:410.38px;font-size:11.76px;line-height:14px;color:#252423;">Midwest</div>
<div class="t" style="left:784.3px;top:410.38px;font-size:11.76px;line-height:14px;color:#252423;">Ohio</div>
<div class="t" style="right:147px;top:410.38px;font-size:11.76px;line-height:14px;color:#252423;">$481,670,545</div>
<div class="t" style="right:18.5px;top:410.38px;font-size:11.76px;line-height:14px;color:#252423;">43.14%</div>
<div class="r" style="left:674px;top:429.64px;width:463px;height:21.2px;background:#ececec;"></div>
<div class="t" style="left:679px;top:432.32px;font-size:11.76px;line-height:14px;color:#252423;">South</div>
<div class="t" style="left:784.3px;top:432.32px;font-size:11.76px;line-height:14px;color:#252423;">Florida</div>
<div class="t" style="right:147px;top:432.32px;font-size:11.76px;line-height:14px;color:#252423;">$446,446,335</div>
<div class="t" style="right:18.5px;top:432.32px;font-size:11.76px;line-height:14px;color:#252423;">24.33%</div>
<div class="t" style="left:679px;top:454.26px;font-size:11.76px;line-height:14px;color:#252423;">Northeast</div>
<div class="t" style="left:784.3px;top:454.26px;font-size:11.76px;line-height:14px;color:#252423;">Pennsylvania</div>
<div class="t" style="right:147px;top:454.26px;font-size:11.76px;line-height:14px;color:#252423;">$398,993,889</div>
<div class="t" style="right:18.5px;top:454.26px;font-size:11.76px;line-height:14px;color:#252423;">22.41%</div>
<div class="r" style="left:674px;top:473.52px;width:463px;height:21.2px;background:#ececec;"></div>
<div class="t" style="left:679px;top:476.20px;font-size:11.76px;line-height:14px;color:#252423;">West</div>
<div class="t" style="left:784.3px;top:476.20px;font-size:11.76px;line-height:14px;color:#252423;">California</div>
<div class="t" style="right:147px;top:476.20px;font-size:11.76px;line-height:14px;color:#252423;">$395,113,233</div>
<div class="t" style="right:18.5px;top:476.20px;font-size:11.76px;line-height:14px;color:#252423;">44.07%</div>
<div class="r" style="left:669px;top:518.1px;width:481px;height:20.6px;background:#2f3e4d;"></div>
<div class="r" style="left:674px;top:537.8000000000001px;width:465.20000000000005px;height:1.4px;background:#fff;"></div>
<div class="t" style="left:507.5px;width:800px;text-align:center;top:517.95px;font-size:14px;line-height:17px;color:#fff;">AYTD Disbursements in Top 10 States</div>
<div class="t" style="left:679px;top:540.63px;font-size:11.76px;line-height:14px;color:#252423;">State</div>
<div class="t" style="right:206px;top:540.63px;font-size:11.76px;line-height:14px;color:#252423;">Market Disbursed AYTD</div>
<div class="t" style="right:15.5px;top:540.63px;font-size:11.76px;line-height:14px;color:#252423;">Per Enrolled Student Market</div>
<div class="t" style="right:15.5px;top:554.63px;font-size:11.76px;line-height:14px;color:#252423;">Disbursement AYTD</div>
<svg class="r" style="left:807.7px;top:569.6px" width="8" height="5" viewBox="0 0 8 5"><path d="M0.3 0.2H7.7L4 4.2Z" fill="#111"/></svg>
<div class="r" style="left:674px;top:579.3px;width:465.20000000000005px;height:1.1px;background:#8fc4f2;"></div>
<div class="t" style="left:679px;top:583.48px;font-size:11.76px;line-height:14px;color:#252423;">Texas</div>
<div class="t" style="right:206px;top:583.48px;font-size:11.76px;line-height:14px;color:#252423;">$541,323,992</div>
<div class="t" style="right:15.5px;top:583.48px;font-size:11.76px;line-height:14px;color:#252423;">$8,322</div>
<div class="r" style="left:674px;top:601.92px;width:465.20000000000005px;height:21.2px;background:#ececec;"></div>
<div class="t" style="left:679px;top:605.40px;font-size:11.76px;line-height:14px;color:#252423;">Virginia</div>
<div class="t" style="right:206px;top:605.40px;font-size:11.76px;line-height:14px;color:#252423;">$487,019,086</div>
<div class="t" style="right:15.5px;top:605.40px;font-size:11.76px;line-height:14px;color:#252423;">$13,998</div>
<div class="t" style="left:679px;top:627.32px;font-size:11.76px;line-height:14px;color:#252423;">Ohio</div>
<div class="t" style="right:206px;top:627.32px;font-size:11.76px;line-height:14px;color:#252423;">$481,670,545</div>
<div class="t" style="right:15.5px;top:627.32px;font-size:11.76px;line-height:14px;color:#252423;">$2,361</div>
<div class="r" style="left:674px;top:645.76px;width:465.20000000000005px;height:21.2px;background:#ececec;"></div>
<div class="t" style="left:679px;top:649.24px;font-size:11.76px;line-height:14px;color:#252423;">Florida</div>
<div class="t" style="right:206px;top:649.24px;font-size:11.76px;line-height:14px;color:#252423;">$446,446,335</div>
<div class="t" style="right:15.5px;top:649.24px;font-size:11.76px;line-height:14px;color:#252423;">$2,450</div>
<div class="t" style="left:679px;top:671.16px;font-size:11.76px;line-height:14px;color:#252423;">Pennsylvania</div>
<div class="t" style="right:206px;top:671.16px;font-size:11.76px;line-height:14px;color:#252423;">$398,993,889</div>
<div class="t" style="right:15.5px;top:671.16px;font-size:11.76px;line-height:14px;color:#252423;">$11,938</div>
<div class="r" style="left:674px;top:689.6px;width:465.20000000000005px;height:21.2px;background:#ececec;"></div>
<div class="t" style="left:679px;top:693.08px;font-size:11.76px;line-height:14px;color:#252423;">Massachusetts</div>
<div class="t" style="right:206px;top:693.08px;font-size:11.76px;line-height:14px;color:#252423;">$396,566,081</div>
<div class="t" style="right:15.5px;top:693.08px;font-size:11.76px;line-height:14px;color:#252423;">$7,690</div>
<div class="t" style="left:679px;top:715.00px;font-size:11.76px;line-height:14px;color:#252423;">California</div>
<div class="t" style="right:206px;top:715.00px;font-size:11.76px;line-height:14px;color:#252423;">$395,113,233</div>
<div class="t" style="right:15.5px;top:715.00px;font-size:11.76px;line-height:14px;color:#252423;">$1,773</div>
<div class="r" style="left:674px;top:733.44px;width:465.20000000000005px;height:21.2px;background:#ececec;"></div>
<div class="t" style="left:679px;top:736.92px;font-size:11.76px;line-height:14px;color:#252423;">Michigan</div>
<div class="t" style="right:206px;top:736.92px;font-size:11.76px;line-height:14px;color:#252423;">$352,911,556</div>
<div class="t" style="right:15.5px;top:736.92px;font-size:11.76px;line-height:14px;color:#252423;">$4,315</div>
<div class="t" style="left:679px;top:758.84px;font-size:11.76px;line-height:14px;color:#252423;">Illinois</div>
<div class="t" style="right:206px;top:758.84px;font-size:11.76px;line-height:14px;color:#252423;">$262,452,375</div>
<div class="t" style="right:15.5px;top:758.84px;font-size:11.76px;line-height:14px;color:#252423;">$1,102</div>
<div class="r" style="left:674px;top:777.28px;width:465.20000000000005px;height:21.2px;background:#ececec;"></div>
<div class="t" style="left:679px;top:780.76px;font-size:11.76px;line-height:14px;color:#252423;">New York</div>
<div class="t" style="right:206px;top:780.76px;font-size:11.76px;line-height:14px;color:#252423;">$213,867,772</div>
<div class="t" style="right:15.5px;top:780.76px;font-size:11.76px;line-height:14px;color:#252423;">$1,283</div>
<div class="r" style="left:674px;top:798.5px;width:465.20000000000005px;height:1.2px;background:#3b9be6;"></div>
<div class="t" style="left:679px;top:802.73px;font-size:11.76px;line-height:14px;font-weight:bold;color:#252423;">Total</div>
<div class="t" style="right:206px;top:802.73px;font-size:11.76px;line-height:14px;font-weight:bold;color:#252423;">$3,976,364,864</div>
<div class="t" style="right:15.5px;top:802.73px;font-size:11.76px;line-height:14px;font-weight:bold;color:#252423;">$3,105</div>
</body></html>
